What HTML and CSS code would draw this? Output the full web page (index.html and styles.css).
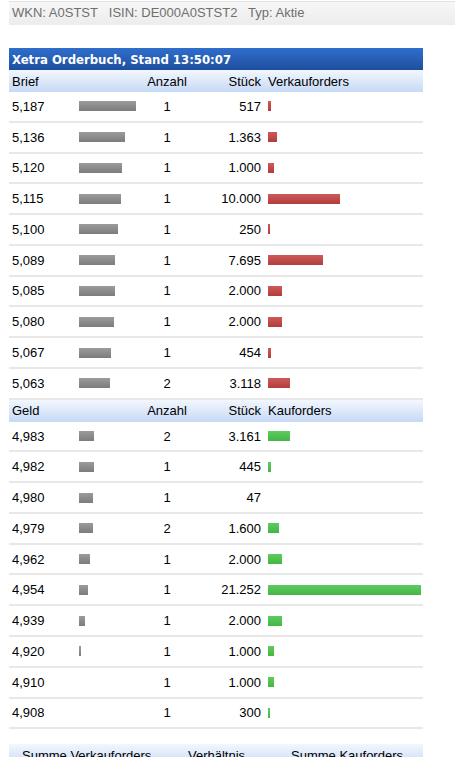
FILE: index.html
```html
<!DOCTYPE html>
<html lang="de">
<head>
<meta charset="utf-8">
<title>Xetra Orderbuch</title>
<link rel="stylesheet" href="styles.css">
</head>
<body>
<div class="page">
  <div class="topbar">WKN: A0STST&nbsp;&nbsp; ISIN: DE000A0STST2&nbsp;&nbsp; Typ: Aktie</div>

  <table class="book">
    <colgroup>
      <col class="c-price"><col class="c-bar"><col class="c-cnt"><col class="c-qty"><col class="c-vol">
    </colgroup>
    <thead>
      <tr class="title"><th colspan="5">Xetra Orderbuch, Stand 13:50:07</th></tr>
    </thead>
    <tbody>
      <tr class="head"><td class="price">Brief</td><td></td><td class="cnt">Anzahl</td><td class="qty">Stück</td><td class="vol">Verkauforders</td></tr>
      <tr><td class="price">5,187</td><td><span class="gbar" style="width:57px"></span></td><td class="cnt">1</td><td class="qty">517</td><td class="vol"><span class="rbar" style="width:3px"></span></td></tr>
      <tr><td class="price">5,136</td><td><span class="gbar" style="width:46px"></span></td><td class="cnt">1</td><td class="qty">1.363</td><td class="vol"><span class="rbar" style="width:9px"></span></td></tr>
      <tr><td class="price">5,120</td><td><span class="gbar" style="width:43px"></span></td><td class="cnt">1</td><td class="qty">1.000</td><td class="vol"><span class="rbar" style="width:6px"></span></td></tr>
      <tr><td class="price">5,115</td><td><span class="gbar" style="width:42px"></span></td><td class="cnt">1</td><td class="qty">10.000</td><td class="vol"><span class="rbar" style="width:72px"></span></td></tr>
      <tr><td class="price">5,100</td><td><span class="gbar" style="width:39px"></span></td><td class="cnt">1</td><td class="qty">250</td><td class="vol"><span class="rbar" style="width:2px"></span></td></tr>
      <tr><td class="price">5,089</td><td><span class="gbar" style="width:36px"></span></td><td class="cnt">1</td><td class="qty">7.695</td><td class="vol"><span class="rbar" style="width:55px"></span></td></tr>
      <tr><td class="price">5,085</td><td><span class="gbar" style="width:36px"></span></td><td class="cnt">1</td><td class="qty">2.000</td><td class="vol"><span class="rbar" style="width:14px"></span></td></tr>
      <tr><td class="price">5,080</td><td><span class="gbar" style="width:35px"></span></td><td class="cnt">1</td><td class="qty">2.000</td><td class="vol"><span class="rbar" style="width:14px"></span></td></tr>
      <tr><td class="price">5,067</td><td><span class="gbar" style="width:32px"></span></td><td class="cnt">1</td><td class="qty">454</td><td class="vol"><span class="rbar" style="width:3px"></span></td></tr>
      <tr><td class="price">5,063</td><td><span class="gbar" style="width:31px"></span></td><td class="cnt">2</td><td class="qty">3.118</td><td class="vol"><span class="rbar" style="width:22px"></span></td></tr>

      <tr class="head"><td class="price">Geld</td><td></td><td class="cnt">Anzahl</td><td class="qty">Stück</td><td class="vol">Kauforders</td></tr>
      <tr><td class="price">4,983</td><td><span class="gbar" style="width:15px"></span></td><td class="cnt">2</td><td class="qty">3.161</td><td class="vol"><span class="kbar" style="width:22px"></span></td></tr>
      <tr><td class="price">4,982</td><td><span class="gbar" style="width:15px"></span></td><td class="cnt">1</td><td class="qty">445</td><td class="vol"><span class="kbar" style="width:3px"></span></td></tr>
      <tr><td class="price">4,980</td><td><span class="gbar" style="width:14px"></span></td><td class="cnt">1</td><td class="qty">47</td><td class="vol"></td></tr>
      <tr><td class="price">4,979</td><td><span class="gbar" style="width:14px"></span></td><td class="cnt">2</td><td class="qty">1.600</td><td class="vol"><span class="kbar" style="width:11px"></span></td></tr>
      <tr><td class="price">4,962</td><td><span class="gbar" style="width:11px"></span></td><td class="cnt">1</td><td class="qty">2.000</td><td class="vol"><span class="kbar" style="width:14px"></span></td></tr>
      <tr><td class="price">4,954</td><td><span class="gbar" style="width:9px"></span></td><td class="cnt">1</td><td class="qty">21.252</td><td class="vol"><span class="kbar" style="width:153px"></span></td></tr>
      <tr><td class="price">4,939</td><td><span class="gbar" style="width:6px"></span></td><td class="cnt">1</td><td class="qty">2.000</td><td class="vol"><span class="kbar" style="width:14px"></span></td></tr>
      <tr><td class="price">4,920</td><td><span class="gbar" style="width:2px"></span></td><td class="cnt">1</td><td class="qty">1.000</td><td class="vol"><span class="kbar" style="width:6px"></span></td></tr>
      <tr><td class="price">4,910</td><td></td><td class="cnt">1</td><td class="qty">1.000</td><td class="vol"><span class="kbar" style="width:6px"></span></td></tr>
      <tr><td class="price">4,908</td><td></td><td class="cnt">1</td><td class="qty">300</td><td class="vol"><span class="kbar" style="width:2px"></span></td></tr>
    </tbody>
  </table>

  <table class="sum">
    <tr class="sumhead"><td class="s1">Summe Verkauforders</td><td class="s2">Verhältnis</td><td class="s3">Summe Kauforders</td></tr>
  </table>
</div>
</body>
</html>
```

FILE: styles.css
```css
html, body {
  margin: 0;
  padding: 0;
  background: #ffffff;
}

body {
  font-family: "Liberation Sans", Arial, sans-serif;
  font-size: 13px;
  color: #000;
}

.page {
  padding: 1px 0 0 9px;
}

.topbar {
  border-top: 1px solid #e2e2e2;
  height: 23px;
  line-height: 22px;
  padding-left: 3px;
  color: #6f6f6f;
  font-size: 13px;
  background: linear-gradient(#f7f7f7, #ececec);
}

.book {
  margin-top: 23px;
  width: 414px;
  border-collapse: collapse;
  table-layout: fixed;
}

.c-price { width: 70px; }
.c-bar { width: 61px; }
.c-cnt { width: 54px; }
.c-qty { width: 74px; }
.c-vol { width: 155px; }

.book td, .book th {
  padding: 0;
  white-space: nowrap;
}

.title th {
  height: 22px;
  text-align: left;
  padding-left: 3px;
  color: #fff;
  font-family: "DejaVu Sans Condensed", "DejaVu Sans", Verdana, sans-serif;
  font-stretch: condensed;
  font-weight: bold;
  font-size: 13px;
  background: linear-gradient(#2f6ecd, #1e4f9e);
}

.head td {
  height: 22px;
  font-size: 13px;
  background: linear-gradient(#f3f7fe, #c6d9f6);
}

.book tbody tr:not(.head) td {
  height: 28.78px;
  border-bottom: 2px solid #e8e8e8;
  font-size: 13px;
}

.price { padding-left: 3px !important; }
.cnt { text-align: center; }
.qty { text-align: right; padding-right: 7px !important; }
.vol { text-align: left; }

.gbar, .rbar, .kbar {
  display: block;
  height: 10px;
}

.gbar { background: linear-gradient(#9b9b9b, #7c7c7c); }
.rbar { background: linear-gradient(#cd5a5a, #b33c3c); }
.kbar { background: linear-gradient(#5ecb5e, #44b644); }

.sum {
  margin-top: 15px;
  width: 414px;
  border-collapse: collapse;
}

.sumhead td {
  height: 22px;
  font-size: 13px;
  background: linear-gradient(#f3f7fe, #c6d9f6);
  padding: 0;
}

.s1 { padding-left: 13px !important; width: 166px; }
.s2 { width: 103px; }
.s3 { }
```
